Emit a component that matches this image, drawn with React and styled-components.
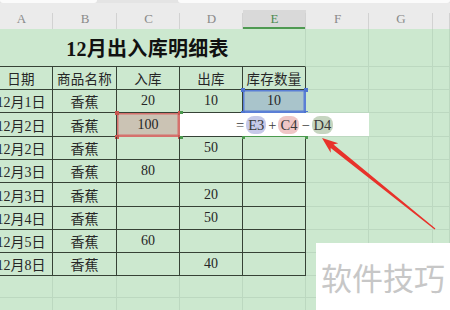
import styled, { createGlobalStyle } from 'styled-components';

const GlobalStyle = createGlobalStyle`
  body {
    margin: 0;
    background: #cce8cf;
    overflow: hidden;
  }
`;

const COLS = '63px 64px 63px 63px 63px 63px 64px 1fr';
const ROWS = '38px 23px 23px 24px 23px 23px 24px 23px 23px 23px 22px 23px';
const DARK = '#364236';
const FAINT = '#bcd8c0';
const CELL_FONT = '"Liberation Serif", "Noto Sans CJK SC", serif';

const Sheet = styled.div`
  position: relative;
  width: 450px;
  height: 310px;
  overflow: hidden;
  background: #cce8cf;
`;

const TopStrip = styled.div`
  display: flex;
  height: 3px;
  background: #e4e4e4;
`;

const StripTab = styled.div`
  width: ${(p) => p.$w};
  flex: ${(p) => (p.$grow ? 1 : 'none')};
  margin-left: ${(p) => p.$gap || 0};
  background: #fbfbfb;
  border-radius: 0 0 3px 3px;
`;

const ColHeader = styled.div`
  display: grid;
  grid-template-columns: ${COLS};
  align-items: end;
  height: 26px;
  margin-left: -10px;
  background: #ebebeb;
`;

const ColLabel = styled.div`
  position: relative;
  height: 19px;
  display: flex;
  align-items: center;
  justify-content: center;
  box-sizing: border-box;
  font-family: "Liberation Serif", serif;
  font-size: 13px;
  color: ${(p) => (p.$active ? '#4d8a50' : '#8a8a8a')};
  background: ${(p) => (p.$active ? '#d9d9d9' : 'transparent')};
  border-bottom: 2px solid ${(p) => (p.$active ? '#4f9a52' : 'transparent')};

  &::after {
    content: '';
    position: absolute;
    right: 0;
    top: 3px;
    bottom: -2px;
    width: 1px;
    background: #d2d2d2;
  }
`;

const Grid = styled.div`
  display: grid;
  grid-template-columns: ${COLS};
  grid-template-rows: ${ROWS};
  margin-left: -10px;
`;

const Cell = styled.div`
  position: relative;
  box-sizing: border-box;
  display: flex;
  align-items: center;
  justify-content: center;
  white-space: nowrap;
  font-family: ${CELL_FONT};
  font-size: 14px;
  color: #262626;
  border-right: 1px solid ${(p) => (p.$dark ? DARK : FAINT)};
  border-bottom: 1px solid ${(p) => (p.$dark ? DARK : FAINT)};
`;

const TitleCell = styled(Cell)`
  grid-column: 1 / 6;
  border-right: 1px solid ${FAINT};
  border-bottom: 1px solid ${DARK};
  font-size: 20px;
  font-weight: 700;
  color: #111;
  letter-spacing: 0.3px;
`;

const HeadCell = styled(Cell)`
  font-size: 13.5px;
  letter-spacing: 0.2px;
`;

// selected cell ranges referenced by the formula
const RefCell = styled(Cell)`
  background: ${(p) => p.$fill};
  box-shadow: inset 0 0 0 1.5px ${(p) => p.$edge};
  border-right-color: ${(p) => p.$edge};
  border-bottom-color: ${(p) => p.$edge};
`;

const Handle = styled.span`
  position: absolute;
  width: 4px;
  height: 4px;
  background: ${(p) => p.$c};
  top: ${(p) => (p.$b ? 'auto' : '-2px')};
  bottom: ${(p) => (p.$b ? '-3px' : 'auto')};
  left: ${(p) => (p.$r ? 'auto' : '-2px')};
  right: ${(p) => (p.$r ? '-3px' : 'auto')};
`;

const EditBox = styled.div`
  position: relative;
  grid-column: 4 / 7;
  display: flex;
  align-items: center;
  gap: 1px;
  padding-left: 55px;
  background: #fff;
  font-family: ${CELL_FONT};
  font-size: 14.5px;
  color: #3a3a3a;

  &::after {
    content: '';
    position: absolute;
    left: 0;
    right: 0;
    bottom: 0;
    height: 1px;
    background: linear-gradient(to right, ${DARK} 0 63px, #4b9a4e 63px 126px, ${FAINT} 126px);
  }
`;

const Tick = styled.span`
  position: absolute;
  left: ${(p) => p.$x}px;
  bottom: ${(p) => (p.$top ? 'auto' : '-2px')};
  top: ${(p) => (p.$top ? '-2px' : 'auto')};
  width: 3px;
  height: 3px;
  background: #4b9a4e;
  z-index: 1;
`;

const Ref = styled.span`
  background: ${(p) => p.$bg};
  border-radius: 8px;
  padding: 0 2px;
  line-height: 18px;
`;

const Op = styled.span`
  padding: 0 1px;
`;

const ArrowLayer = styled.svg`
  position: absolute;
  left: 0;
  top: 0;
  pointer-events: none;
`;

const Watermark = styled.div`
  position: absolute;
  left: 316px;
  top: 243px;
  width: 134px;
  height: 67px;
  display: flex;
  align-items: center;
  padding-left: 5px;
  box-sizing: border-box;
  background: #fff;
  font-family: "Noto Sans CJK SC", sans-serif;
  font-size: 31px;
  color: #c7c7c7;
`;

const letters = ['A', 'B', 'C', 'D', 'E', 'F', 'G', ''];
const headers = ['日期', '商品名称', '入库', '出库', '库存数量'];
const rows = [
  ['12月1日', '香蕉', '20', '10', '10'],
  ['12月2日', '香蕉', '100', null, null],
  ['12月2日', '香蕉', '', '50', ''],
  ['12月3日', '香蕉', '80', '', ''],
  ['12月3日', '香蕉', '', '20', ''],
  ['12月4日', '香蕉', '', '50', ''],
  ['12月5日', '香蕉', '60', '', ''],
  ['12月8日', '香蕉', '', '40', ''],
];

const Faint = ({ n }) => Array.from({ length: n }, (_, i) => <Cell key={`f${i}`} />);

const Corners = ({ c }) => (
  <>
    <Handle $c={c} />
    <Handle $c={c} $r />
    <Handle $c={c} $b />
    <Handle $c={c} $b $r />
  </>
);

const renderRow = (row, ri) => {
  if (ri === 0) {
    return [
      ...row.slice(0, 4).map((v, ci) => <Cell key={ci} $dark>{v}</Cell>),
      <RefCell key="e3" $dark $fill="#a9c4cb" $edge="#5b7fd6">
        {row[4]}
        <Corners c="#4f74d0" />
      </RefCell>,
      ...Faint({ n: 3 }),
    ];
  }
  if (ri === 1) {
    return [
      <Cell key="a" $dark>{row[0]}</Cell>,
      <Cell key="b" $dark>{row[1]}</Cell>,
      <RefCell key="c4" $dark $fill="#cbc3b4" $edge="#d5716d">
        {row[2]}
        <Corners c="#c95650" />
      </RefCell>,
      <EditBox key="edit">
        <Tick $x={0} $top />
        <Tick $x={0} />
        <Tick $x={62} />
        <Tick $x={125} />
        <Op>=</Op>
        <Ref $bg="#c6c9e9">E3</Ref>
        <Op>+</Op>
        <Ref $bg="#efc6c6">C4</Ref>
        <Op>−</Op>
        <Ref $bg="#c6d5c0">D4</Ref>
      </EditBox>,
      <Cell key="g" />,
      <Cell key="h" />,
    ];
  }
  return [
    ...row.map((v, ci) => <Cell key={ci} $dark>{v}</Cell>),
    ...Faint({ n: 3 }),
  ];
};

const App = () => {
  return (
    <Sheet>
      <GlobalStyle />
      <TopStrip>
        <StripTab $w="97px" />
        <StripTab $gap="81px" $grow />
      </TopStrip>
      <ColHeader>
        {letters.map((l, i) => (
          <ColLabel key={i} $active={l === 'E'}>{l}</ColLabel>
        ))}
      </ColHeader>
      <Grid>
        <TitleCell>12月出入库明细表</TitleCell>
        <Faint n={3} />
        {headers.map((h) => (
          <HeadCell key={h} $dark>{h}</HeadCell>
        ))}
        <Faint n={3} />
        {rows.map((row, ri) => renderRow(row, ri))}
        <Faint n={16} />
      </Grid>
      <ArrowLayer width="450" height="310" viewBox="0 0 450 310">
        <polygon
          points="322,138 338.3,143.3 333.5,144.5 435.4,228.5 434.6,229.5 330.7,147.9 330.7,152.7"
          fill="#e8322a"
        />
      </ArrowLayer>
      <Watermark>软件技巧</Watermark>
    </Sheet>
  );
};

export default App;
